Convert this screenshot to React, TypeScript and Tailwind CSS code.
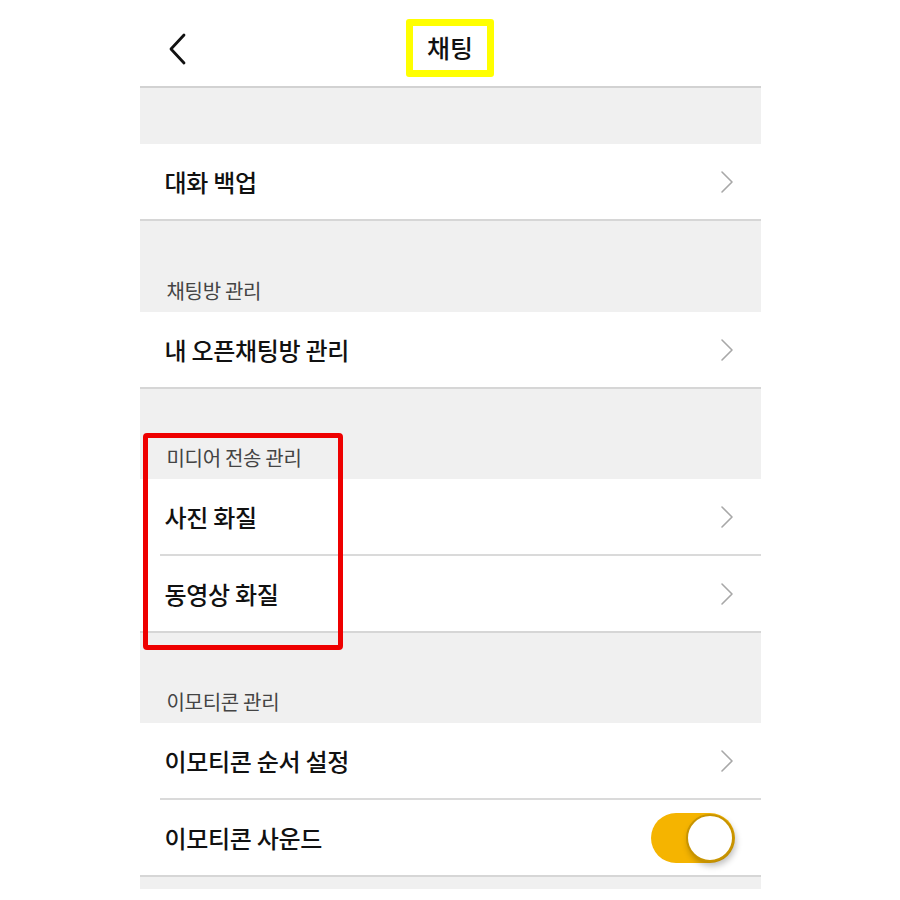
import type { ReactNode } from "react";

const font = { fontFamily: '"Noto Sans CJK KR", "Noto Sans", sans-serif' };

function Chevron() {
  return (
    <svg width="14" height="24" viewBox="0 0 14 24" fill="none" className="shrink-0">
      <path d="M2 2 L12 12 L2 22" stroke="#a8a8a8" strokeWidth="1.6" strokeLinecap="round" strokeLinejoin="round" />
    </svg>
  );
}

function Row({ label, right, divider }: { label: string; right?: ReactNode; divider: "full" | "inset" }) {
  return (
    <div className="bg-white">
      <div className="flex h-[75px] items-center justify-between pl-[25px] pr-[27px]">
        <span className="text-[24px] font-medium tracking-[-0.3px] text-[#111]">{label}</span>
        {right ?? <Chevron />}
      </div>
      <div className={divider === "inset" ? "ml-[20px] h-[2px] bg-[#dadada]" : "h-[2px] bg-[#d6d6d6]"} />
    </div>
  );
}

function SectionTitle({ title, h }: { title: string; h: string }) {
  return (
    <div className={`flex items-end bg-[#f0f0f0] pb-[8px] pl-[27px] ${h}`}>
      <span className="text-[20px] leading-[26px] tracking-[-0.3px] text-[#444]">{title}</span>
    </div>
  );
}

function Toggle() {
  return (
    <div className="relative mr-[-1px] h-[50px] w-[84px] rounded-full bg-[#f5b400]">
      <div className="absolute right-[1px] top-[1px] h-[48px] w-[48px] rounded-full border-2 border-[#c89400] bg-white shadow-[2px_4px_6px_rgba(0,0,0,0.25)]" />
    </div>
  );
}

export default function App() {
  return (
    <div className="flex min-h-[900px] justify-center bg-white" style={font}>
      <div className="w-[621px]">
        <div className="relative flex h-[86px] items-center justify-center pt-[10px]">
          <svg width="22" height="32" viewBox="0 0 22 32" fill="none" className="absolute left-[27px] top-[33px]">
            <path d="M17 2 L4 16 L17 30" stroke="#111" strokeWidth="2.8" strokeLinecap="round" strokeLinejoin="round" />
          </svg>
          <div className="flex h-[58px] w-[88px] items-center justify-center rounded-[3px] border-[7px] border-[#ffff00]">
            <span className="text-[25px] font-medium text-[#111]">채팅</span>
          </div>
        </div>
        <div className="h-[2px] bg-[#d2d2d2]" />
        <div className="h-[56px] bg-[#f0f0f0]" />
        <Row label="대화 백업" divider="full" />

        <SectionTitle title="채팅방 관리" h="h-[91px]" />
        <Row label="내 오픈채팅방 관리" divider="full" />

        <div className="relative">
          <SectionTitle title="미디어 전송 관리" h="h-[90px]" />
          <Row label="사진 화질" divider="inset" />
          <Row label="동영상 화질" divider="full" />
          <div className="absolute left-[3px] top-[44px] h-[217px] w-[200px] rounded-[4px] border-[5px] border-[#ee0000]" />
        </div>

        <SectionTitle title="이모티콘 관리" h="h-[90px]" />
        <Row label="이모티콘 순서 설정" divider="inset" />
        <Row label="이모티콘 사운드" divider="full" right={<Toggle />} />
        <div className="h-[12px] bg-[#f0f0f0]" />
      </div>
    </div>
  );
}
